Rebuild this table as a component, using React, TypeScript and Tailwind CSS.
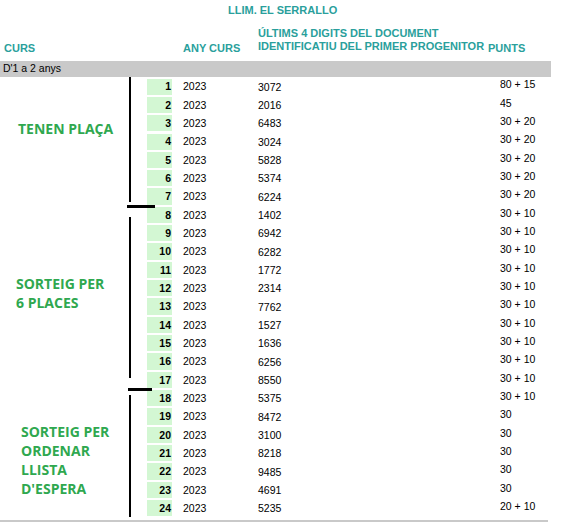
import React from "react";

const rows: [number, string, string][] = [
  [1, "3072", "80 + 15"],
  [2, "2016", "45"],
  [3, "6483", "30 + 20"],
  [4, "3024", "30 + 20"],
  [5, "5828", "30 + 20"],
  [6, "5374", "30 + 20"],
  [7, "6224", "30 + 20"],
  [8, "1402", "30 + 10"],
  [9, "6942", "30 + 10"],
  [10, "6282", "30 + 10"],
  [11, "1772", "30 + 10"],
  [12, "2314", "30 + 10"],
  [13, "7762", "30 + 10"],
  [14, "1527", "30 + 10"],
  [15, "1636", "30 + 10"],
  [16, "6256", "30 + 10"],
  [17, "8550", "30 + 10"],
  [18, "5375", "30 + 10"],
  [19, "8472", "30"],
  [20, "3100", "30"],
  [21, "8218", "30"],
  [22, "9485", "30"],
  [23, "4691", "30"],
  [24, "5235", "20 + 10"],
];

const teal = "text-[#2a9f9c]";

export default function App() {
  return (
    <div
      className="w-[578px] h-[523px] bg-white overflow-hidden text-black"
      style={{ fontFamily: '"Liberation Sans", Arial, sans-serif' }}
    >
      {/* title */}
      <div className={`h-[20px] flex items-center pl-[228px] text-[11px] leading-[13px] font-bold ${teal}`}>
        LLIM. EL SERRALLO
      </div>
      {/* header */}
      <div className={`h-[41px] flex items-end pb-[6px] text-[11px] leading-[13px] font-bold ${teal}`}>
        <div className="w-[183px] pl-[4px]">CURS</div>
        <div className="w-[75px]">ANY CURS</div>
        <div className="w-[230px] mb-[2px]">
          <div>ÚLTIMS 4 DIGITS DEL DOCUMENT</div>
          <div>IDENTIFICATIU DEL PRIMER PROGENITOR</div>
        </div>
        <div>PUNTS</div>
      </div>
      {/* group bar */}
      <div className="w-[551px] h-[16px] bg-[#c9c9c9] flex items-center pl-[3px] text-[10.5px]">
        D'1 a 2 anys
      </div>
      {/* body */}
      <div className="flex relative">
        {/* left labels column */}
        <div
          className="w-[147px] flex flex-col text-[14px] leading-[19px] font-bold text-[#2fa84f]"
          style={{ fontFamily: '"Open Sans", sans-serif' }}
        >
          <div className="h-[128.3px] pl-[18px] pt-[42px]">TENEN PLAÇA</div>
          <div className="h-[183.3px] pl-[16px] pt-[69px]">
            <div>SORTEIG PER</div>
            <div>6 PLACES</div>
          </div>
          <div className="h-[128.3px] pl-[21px] pt-[33px]">
            <div>SORTEIG PER</div>
            <div>ORDENAR</div>
            <div>LLISTA</div>
            <div>D'ESPERA</div>
          </div>
        </div>
        {/* bracket drawing */}
        <div className="absolute left-[129px] top-0 w-[1.5px] h-[125px] bg-black" />
        <div className="absolute left-[127px] top-[128px] w-[28px] h-[3px] bg-black" />
        <div className="absolute left-[129px] top-[140px] w-[1.5px] h-[161px] bg-black" />
        <div className="absolute left-[128px] top-[311px] w-[24px] h-[3px] bg-black" />
        <div className="absolute left-[129px] top-[318px] w-[1.5px] h-[122px] bg-black" />
        {/* rows */}
        <div className="flex flex-col text-[10.5px]">
          {rows.map(([n, doc, pts]) => (
            <div key={n} className="h-[18.33px] flex items-center">
              <div className="w-[25px] h-[16.3px] mt-[1px] bg-[#d3f7d3] flex items-center justify-end pr-[1px] pt-[1px] font-bold">
                {n}
              </div>
              <div className="w-[11px]" />
              <div className="w-[75px] pt-[2px]">2023</div>
              <div className="w-[241px] pt-[3px]">{doc}</div>
              <div className="pl-[1px] -translate-y-[1px]">{pts}</div>
            </div>
          ))}
        </div>
      </div>
      {/* bottom line */}
      <div className="mt-[3px] w-[548px] h-[2px] bg-[#c9c9c9]" />
    </div>
  );
}
